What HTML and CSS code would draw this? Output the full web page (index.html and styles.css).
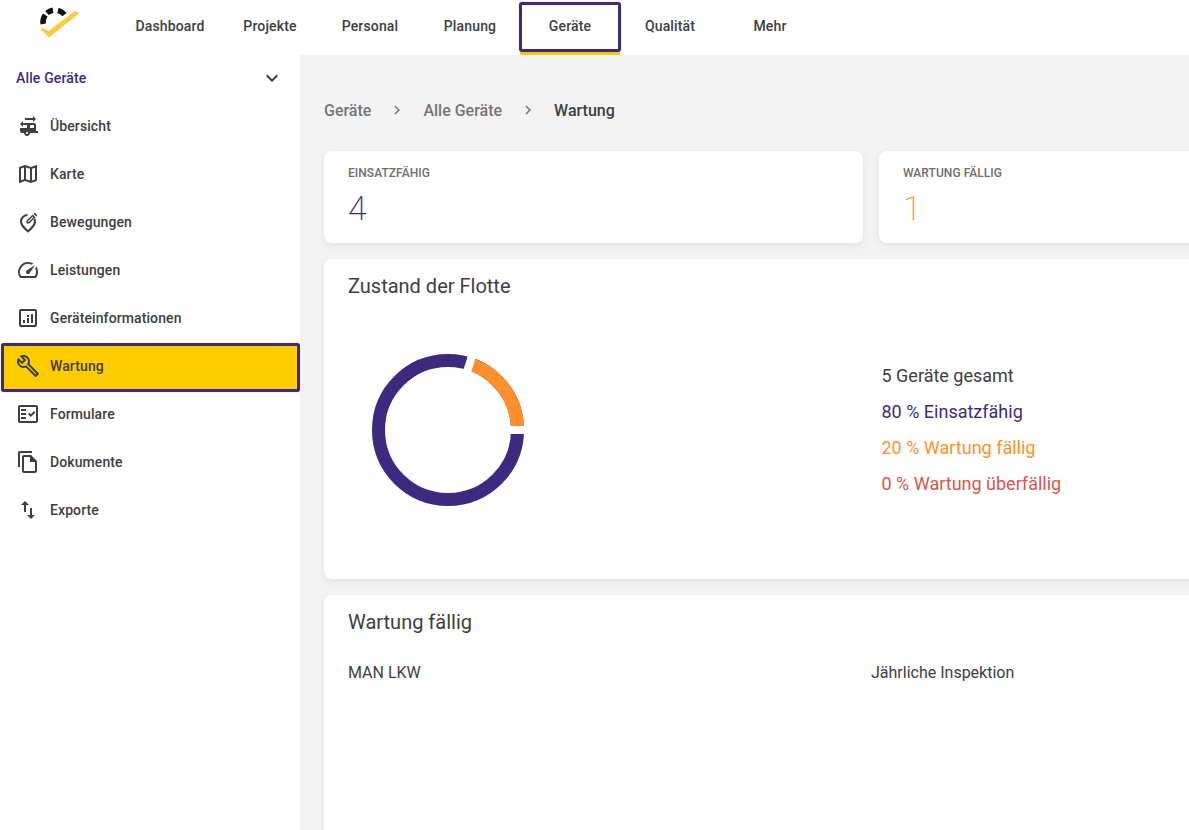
FILE: index.html
```html
<!DOCTYPE html>
<html lang="de">
<head>
    <meta charset="UTF-8">
    <meta name="viewport" content="width=device-width, initial-scale=1.0">
    <title>Wartung</title>
    <link rel="stylesheet" href="styles.css">
</head>
<body>
    <header class="topbar">
        <div class="logo">
            <svg viewBox="0 0 60 45" width="60" height="45">
                <path d="M10.700 29L19 37.500 49.500 13 45 11 18.500 31 12 27.500z" fill="#fdcb3e"/>
                <path d="M13.200 24A12 12 0 0 1 15.300 15M17 13A12 12 0 0 1 23 10.200M28 10.400A12 12 0 0 1 34.500 14.600" fill="none" stroke="#111" stroke-width="5.500"/>
            </svg>
        </div>
        <nav class="topnav">
            <a>Dashboard</a>
            <a>Projekte</a>
            <a>Personal</a>
            <a>Planung</a>
            <a class="active">Geräte</a>
            <a>Qualität</a>
            <a>Mehr</a>
        </nav>
    </header>
    <div class="layout">
        <aside class="sidebar">
            <div class="select">
                <span>Alle Geräte</span>
                <svg class="chevron" viewBox="0 0 24 24" width="24" height="24"><path d="M7.410 8.590L12 13.170l4.590-4.580L18 10l-6 6-6-6z"/></svg>
            </div>
            <a class="side-item">
                <svg viewBox="0 0 24 24"><path d="M20 17v-6c0-1.100-.9-2-2-2H7V7l-3 3 3 3v-2h4v3H4v3c0 1.100.9 2 2 2h2c0 1.660 1.340 3 3 3s3-1.340 3-3h8v-2h-2zm-9 3c-.55 0-1-.45-1-1s.45-1 1-1 1 .45 1 1-.45 1-1 1zm7-6h-4v-3h4v3zM17 2v2H9v2h8v2l3-3z"/></svg>
                Übersicht
            </a>
            <a class="side-item">
                <svg viewBox="0 0 24 24"><path d="M20.500 3l-.16.03L15 5.100 9 3 3.360 4.900c-.21.07-.36.25-.36.48V20.500c0 .28.22.5.5.5l.16-.03L9 18.900l6 2.100 5.640-1.900c.21-.07.36-.25.36-.48V3.500c0-.28-.22-.5-.5-.5zM10 5.470l4 1.400v11.660l-4-1.400V5.470zm-5 .99l3-1.010v11.700l-3 1.160V6.460zm14 11.080l-3 1.010V6.860l3-1.160v11.840z"/></svg>
                Karte
            </a>
            <a class="side-item">
                <svg viewBox="0 0 24 24"><path d="M12 22.700C7.500 18.900 4 15.500 4 11.500 4 7.500 7.200 4.400 11.500 4v2.100C8.400 6.500 6.100 8.700 6.100 11.500c0 2.600 2.300 5.200 5.900 8.400 3.600-3.200 5.900-5.800 5.900-8.400 0-.6-.1-1.200-.3-1.700l1.700-1.700c.4 1 .7 2.100.7 3.400 0 4-3.500 7.400-8 11.200z"/><path fill-rule="evenodd" d="M10.500 13.500v-2.800l6.200-6.200 2.800 2.800-6.200 6.200zM12 12h.7l4.700-4.700-.7-.7-4.700 4.700zM17.600 3.700l.6-.6c.3-.3.7-.3 1 0l1.700 1.700c.3.3.3.7 0 1l-.6.6z"/></svg>
                Bewegungen
            </a>
            <a class="side-item">
                <svg viewBox="0 0 24 24"><path d="M20.380 8.570l-1.230 1.850a8 8 0 0 1-.22 7.580H5.070A8 8 0 0 1 15.580 6.850l1.850-1.230A10 10 0 0 0 3.350 19a2 2 0 0 0 1.720 1h13.850a2 2 0 0 0 1.740-1 10 10 0 0 0-.27-10.440z"/><path d="M10.590 15.410a2 2 0 0 0 2.830 0l5.660-8.490-8.490 5.660a2 2 0 0 0 0 2.830z"/></svg>
                Leistungen
            </a>
            <a class="side-item">
                <svg viewBox="0 0 24 24"><path d="M19 3H5c-1.100 0-2 .9-2 2v14c0 1.100.9 2 2 2h14c1.100 0 2-.9 2-2V5c0-1.100-.9-2-2-2zm0 16H5V5h14v14zM7 14h2v3H7zM11 12h2v5h-2zM11 9h2v2h-2zM15 8h2v9h-2z"/></svg>
                Geräteinformationen
            </a>
            <a class="side-item selected">
                <svg viewBox="0 0 24 24"><path d="M22.610 18.990l-9.080-9.080c.93-2.340.45-5.100-1.440-7C9.790.61 6.210.4 3.660 2.260L7.500 6.110 6.080 7.520 2.250 3.690C.39 6.230.6 9.820 2.900 12.110c1.860 1.860 4.570 2.350 6.890 1.480l9.110 9.110c.39.39 1.020.39 1.410 0l2.300-2.300c.4-.38.4-1.020 0-1.410zm-3 1.600l-9.460-9.460c-.61.45-1.290.72-2 .82-1.360.2-2.790-.21-3.830-1.250C3.370 9.760 2.930 8.500 3 7.260l3.090 3.090 4.240-4.240-3.090-3.090c1.240-.07 2.490.37 3.440 1.310 1.080 1.080 1.490 2.570 1.240 3.960-.12.71-.42 1.370-.88 1.960l9.450 9.450-.88.88z"/></svg>
                Wartung
            </a>
            <a class="side-item">
                <svg viewBox="0 0 24 24"><path d="M20 3H4c-1.100 0-2 .9-2 2v14c0 1.100.9 2 2 2h16c1.100 0 2-.9 2-2V5c0-1.100-.9-2-2-2zm0 16H4V5h16v14zM19.410 10.420l-1.420-1.420-3.170 3.170-1.410-1.420L12 12.160 14.820 15zM5 7h5v2H5zM5 11h5v2H5zM5 15h5v2H5z"/></svg>
                Formulare
            </a>
            <a class="side-item">
                <svg viewBox="0 0 24 24"><path d="M16 1H4c-1.100 0-2 .9-2 2v14h2V3h12V1zm-1 4H8c-1.100 0-2 .9-2 2v14c0 1.100.9 2 2 2h11c1.100 0 2-.9 2-2V11l-6-6zM8 21V7h6v5h5v9H8z"/></svg>
                Dokumente
            </a>
            <a class="side-item">
                <svg viewBox="0 0 24 24"><path d="M9 3L5 6.990h3V14h2V6.990h3L9 3zm7 14.010V10h-2v7.010h-3L15 21l4-3.990h-3z"/></svg>
                Exporte
            </a>
        </aside>
        <main class="content">
            <div class="breadcrumb">
                <span>Geräte</span>
                <svg viewBox="0 0 24 24" width="18" height="18"><path d="M10 6L8.590 7.410 13.170 12l-4.580 4.590L10 18l6-6z"/></svg>
                <span>Alle Geräte</span>
                <svg viewBox="0 0 24 24" width="18" height="18"><path d="M10 6L8.590 7.410 13.170 12l-4.580 4.590L10 18l6-6z"/></svg>
                <span class="current">Wartung</span>
            </div>
            <div class="stats">
                <div class="card stat">
                    <div class="stat-label">EINSATZFÄHIG</div>
                    <div class="stat-value purple">4</div>
                </div>
                <div class="card stat">
                    <div class="stat-label">WARTUNG FÄLLIG</div>
                    <div class="stat-value orange">1</div>
                </div>
            </div>
            <section class="card fleet">
                <h2>Zustand der Flotte</h2>
                <div class="fleet-body">
                    <div class="donut">
                        <svg viewBox="0 0 152 152" width="152" height="152">
                            <circle cx="76" cy="76" r="69.500" fill="none" stroke="#3d2a80" stroke-width="13"/>
                            <circle cx="76" cy="76" r="69.500" fill="none" stroke="#ff9029" stroke-width="13" pathLength="100" stroke-dasharray="20 80" transform="rotate(-72 76 76)"/>
                            <line x1="76" y1="76" x2="160" y2="76" stroke="#fff" stroke-width="8"/>
                            <line x1="76" y1="76" x2="102" y2="-4" stroke="#fff" stroke-width="8"/>
                        </svg>
                    </div>
                    <ul class="legend">
                        <li>5 Geräte gesamt</li>
                        <li class="purple">80 % Einsatzfähig</li>
                        <li class="orange">20 % Wartung fällig</li>
                        <li class="red">0 % Wartung überfällig</li>
                    </ul>
                </div>
            </section>
            <section class="card due">
                <h2>Wartung fällig</h2>
                <div class="due-row">
                    <span>MAN LKW</span>
                    <span>Jährliche Inspektion</span>
                </div>
            </section>
        </main>
    </div>
</body>
</html>
```

FILE: styles.css
```css
*{
    box-sizing: border-box;
}
html, body{
    height: 100%;
}
body{
    margin: 0;
    font-family: Roboto, "Liberation Sans", sans-serif;
    color: #3c4043;
    overflow: hidden;
    background-color: #f3f3f3;
}
.topbar{
    display: flex;
    height: 55px;
    background-color: #fff;
}
.logo{
    width: 120px;
    padding-left: 30px;
}
.logo svg{
    display: block;
}
.topnav{
    display: flex;
}
.topnav a{
    position: relative;
    display: flex;
    align-items: center;
    justify-content: center;
    width: 100px;
    height: 52px;
    font-size: 14px;
    font-weight: 500;
    letter-spacing: 0.15px;
}
.topnav a.active{
    box-shadow: 0 3px 0 #ffcc00;
}
.topnav a.active::after{
    content: "";
    position: absolute;
    left: -1px;
    right: -1px;
    top: 2px;
    bottom: 0;
    border: 3px solid #3d2a80;
    border-radius: 3px;
    box-shadow: 0 0 1px rgba(61, 42, 128, 0.6);
}
.layout{
    display: flex;
    height: calc(100% - 55px);
}
.sidebar{
    flex: none;
    width: 300px;
    background-color: #fff;
}
.select{
    display: flex;
    align-items: center;
    justify-content: space-between;
    height: 47px;
    padding: 0 16px 2px;
    font-size: 14px;
    font-weight: 500;
    letter-spacing: 0.15px;
    color: #3d2a80;
}
.chevron{
    fill: #3c4043;
}
.side-item{
    display: flex;
    align-items: center;
    gap: 10px;
    height: 48px;
    padding-left: 16px;
    font-size: 14px;
    font-weight: 500;
    letter-spacing: 0.1px;
}
.side-item svg{
    width: 24px;
    height: 24px;
    fill: #3c4043;
}
.side-item.selected{
    height: 49px;
    margin: 1px 0 -2px 1px;
    padding: 0 0 3px 12px;
    background-color: #ffcc00;
    border: 3px solid #3d2a80;
    border-radius: 3px;
    box-shadow: 0 0 1px rgba(61, 42, 128, 0.6);
}
.content{
    flex: none;
    width: 1142px;
    padding: 24px;
}
.breadcrumb{
    display: flex;
    align-items: center;
    gap: 17px;
    height: 62px;
    font-size: 16px;
    font-weight: 500;
    color: #757575;
}
.breadcrumb svg{
    fill: #757575;
}
.breadcrumb .current{
    color: #3c4043;
}
.card{
    background-color: #fff;
    border-radius: 8px;
    box-shadow: 0 3px 8px rgba(0, 0, 0, 0.07);
}
.stats{
    display: flex;
    gap: 16px;
    margin-top: 10px;
}
.stat{
    flex: 1;
    height: 92px;
    padding: 15px 24px;
}
.stat-label{
    font-size: 12px;
    font-weight: 500;
    line-height: 14px;
    letter-spacing: 0.05px;
    color: #6f6f6f;
}
.stat-value{
    margin-top: 7px;
    font-size: 34px;
    font-weight: 200;
    line-height: 42px;
}
.purple{
    color: #3d2a80;
}
.orange{
    color: #ff9029;
}
.red{
    color: #d9534f;
}
.fleet{
    height: 320px;
    margin-top: 16px;
    padding: 14px 24px;
}
h2{
    margin: 0;
    font-size: 20px;
    font-weight: 400;
    line-height: 26px;
}
.fleet-body{
    display: flex;
    margin-top: 55px;
}
.donut{
    width: 533.500px;
    padding-left: 24px;
}
.donut svg{
    display: block;
    overflow: hidden;
}
.legend{
    list-style-type: none;
    margin: 4px 0 0;
    padding: 0;
    font-size: 18px;
    line-height: 36px;
}
.due{
    height: 400px;
    margin-top: 16px;
    padding: 14px 24px;
}
.due-row{
    display: grid;
    grid-template-columns: 523px 1fr;
    margin-top: 26px;
    font-size: 16px;
    line-height: 24px;
}
```
